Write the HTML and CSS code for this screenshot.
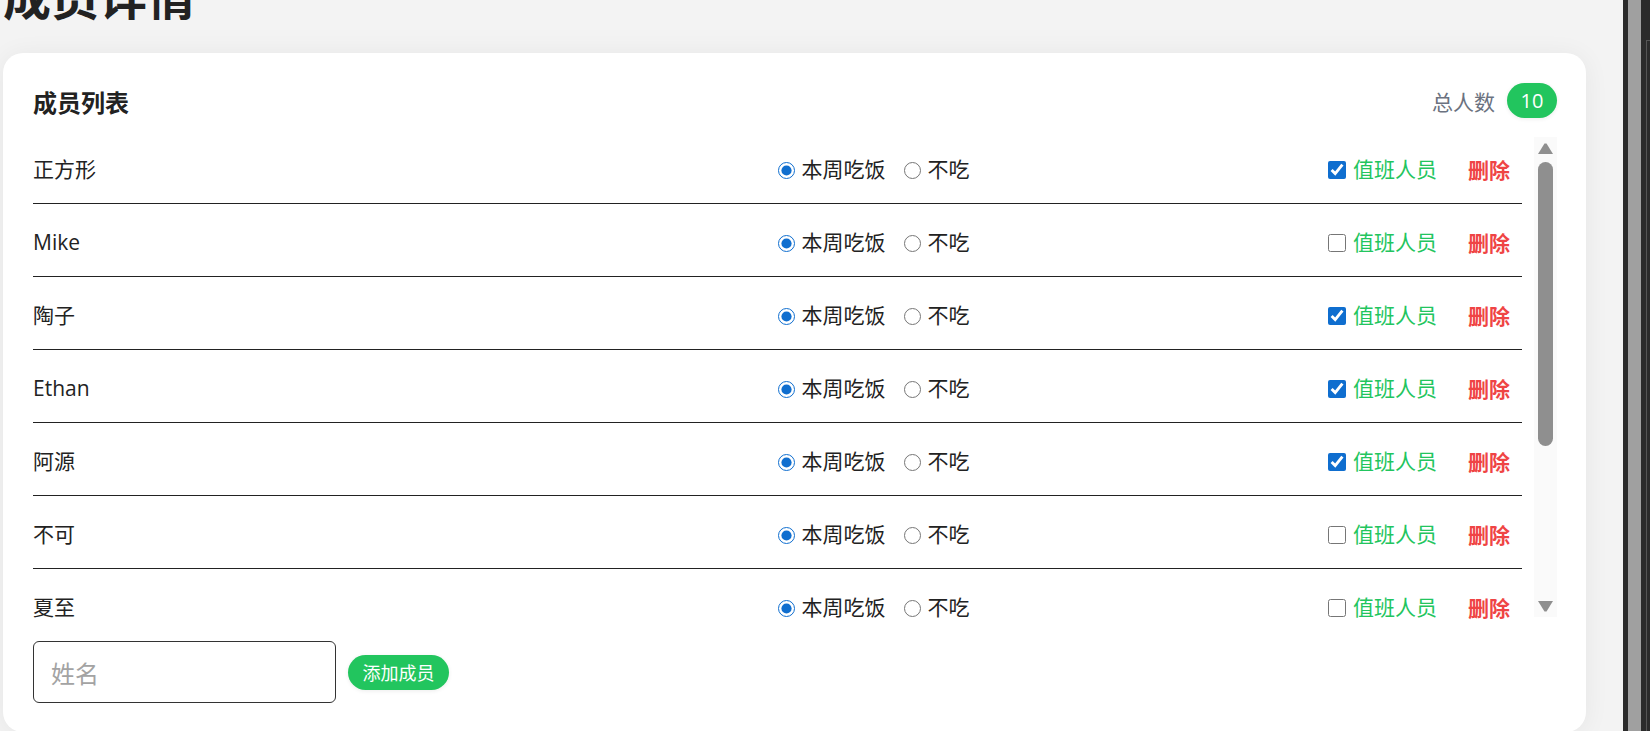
FILE: index.html
```html
<!DOCTYPE html>
<html lang="zh-CN">
<head>
<meta charset="utf-8">
<title>成员详情</title>
<link rel="stylesheet" href="styles.css">
</head>
<body>
<div class="app">
  <main class="page">
    <h1 class="title">成员详情</h1>
    <section class="card">
      <header class="card-head">
        <h2 class="card-title">成员列表</h2>
        <div class="total"><span>总人数</span><span class="badge">10</span></div>
      </header>
      <div class="list-wrap">
        <ul class="list">
          <li class="row">
            <span class="name">正方形</span>
            <div class="meal">
              <label class="opt"><input type="radio" name="m1" checked>本周吃饭</label>
              <label class="opt"><input type="radio" name="m1">不吃</label>
            </div>
            <label class="duty"><input type="checkbox" checked>值班人员</label>
            <button class="del" type="button">删除</button>
          </li>
          <li class="row">
            <span class="name">Mike</span>
            <div class="meal">
              <label class="opt"><input type="radio" name="m2" checked>本周吃饭</label>
              <label class="opt"><input type="radio" name="m2">不吃</label>
            </div>
            <label class="duty"><input type="checkbox">值班人员</label>
            <button class="del" type="button">删除</button>
          </li>
          <li class="row">
            <span class="name">陶子</span>
            <div class="meal">
              <label class="opt"><input type="radio" name="m3" checked>本周吃饭</label>
              <label class="opt"><input type="radio" name="m3">不吃</label>
            </div>
            <label class="duty"><input type="checkbox" checked>值班人员</label>
            <button class="del" type="button">删除</button>
          </li>
          <li class="row">
            <span class="name">Ethan</span>
            <div class="meal">
              <label class="opt"><input type="radio" name="m4" checked>本周吃饭</label>
              <label class="opt"><input type="radio" name="m4">不吃</label>
            </div>
            <label class="duty"><input type="checkbox" checked>值班人员</label>
            <button class="del" type="button">删除</button>
          </li>
          <li class="row">
            <span class="name">阿源</span>
            <div class="meal">
              <label class="opt"><input type="radio" name="m5" checked>本周吃饭</label>
              <label class="opt"><input type="radio" name="m5">不吃</label>
            </div>
            <label class="duty"><input type="checkbox" checked>值班人员</label>
            <button class="del" type="button">删除</button>
          </li>
          <li class="row">
            <span class="name">不可</span>
            <div class="meal">
              <label class="opt"><input type="radio" name="m6" checked>本周吃饭</label>
              <label class="opt"><input type="radio" name="m6">不吃</label>
            </div>
            <label class="duty"><input type="checkbox">值班人员</label>
            <button class="del" type="button">删除</button>
          </li>
          <li class="row">
            <span class="name">夏至</span>
            <div class="meal">
              <label class="opt"><input type="radio" name="m7" checked>本周吃饭</label>
              <label class="opt"><input type="radio" name="m7">不吃</label>
            </div>
            <label class="duty"><input type="checkbox">值班人员</label>
            <button class="del" type="button">删除</button>
          </li>
        </ul>
        <div class="sb">
          <svg class="sb-arrow" viewBox="0 0 15 11"><polygon points="6.5,0.5 8.5,0.5 15,11 0,11" fill="#8f8f8f"/></svg>
          <div class="sb-track"><div class="sb-thumb"></div></div>
          <svg class="sb-arrow" viewBox="0 0 15 11"><polygon points="0,0 15,0 8.5,10.5 6.5,10.5" fill="#8f8f8f"/></svg>
        </div>
      </div>
      <form class="add">
        <input class="add-input" type="text" placeholder="姓名">
        <button class="add-btn" type="button">添加成员</button>
      </form>
    </section>
  </main>
  <div class="winbar">
    <div class="wb-a"></div>
    <div class="wb-b"></div>
    <div class="wb-c"><div class="wb-line"></div></div>
  </div>
</div>
</body>
</html>
```

FILE: styles.css
```css
html, body {
  margin: 0;
  height: 731px;
  overflow: hidden;
}
body {
  background: #f3f3f3;
  color: #222;
  font-family: "Open Sans", "Noto Sans CJK SC", sans-serif;
}
.app {
  display: flex;
  height: 731px;
  overflow: hidden;
}
.page {
  flex: 1;
  min-width: 0;
  padding: 0 37px 0 3px;
}
.title {
  margin: -30px 0 35px;
  font-family: "Noto Sans CJK SC", sans-serif;
  font-size: 48px;
  line-height: 48px;
  font-weight: 700;
  color: #222;
}
.card {
  background: #fff;
  border-radius: 20px;
  padding: 30px 29px 29px 30px;
  box-shadow: 0 2px 26px rgba(0, 0, 0, 0.06);
}
.card-head {
  display: flex;
  justify-content: space-between;
  align-items: center;
  height: 35px;
  margin-bottom: 19px;
}
.card-title {
  margin: 3px 0 0;
  font-family: "Noto Sans CJK SC", sans-serif;
  font-size: 24px;
  font-weight: 700;
  line-height: 32px;
  color: #222;
}
.total {
  display: flex;
  align-items: center;
  gap: 12px;
  color: #6b7280;
  font-size: 21px;
  font-family: "Noto Sans CJK SC", sans-serif;
}
.badge {
  display: flex;
  align-items: center;
  justify-content: center;
  width: 50px;
  height: 35px;
  border-radius: 18px;
  background: #22c55e;
  color: #fff;
  font-family: "Open Sans", sans-serif;
  font-size: 20px;
  box-shadow: 0 1px 4px rgba(0, 0, 0, 0.08);
}
.list-wrap {
  display: flex;
  align-items: flex-start;
  gap: 12px;
  height: 486px;
  margin-bottom: 18px;
}
.list {
  flex: 1;
  min-width: 0;
  height: 486px;
  margin: 0;
  padding: 0;
  list-style: none;
  overflow: hidden;
}
.row {
  display: flex;
  align-items: center;
  height: 66px;
  line-height: 1.2;
  border-bottom: 1px solid #222;
  margin-bottom: 6px;
}
.name {
  flex: 0 0 50%;
  font-size: 21px;
}
.meal {
  display: flex;
  align-items: center;
  font-size: 21px;
}
.opt {
  display: flex;
  align-items: center;
  gap: 7px;
}
.opt + .opt {
  margin-left: 18px;
}
.opt input {
  width: 17px;
  height: 17px;
  margin: 0;
  accent-color: #0f6ecf;
}
.duty {
  margin-left: auto;
  display: flex;
  align-items: center;
  gap: 7px;
  color: #22c55e;
  font-size: 21px;
}
.duty input {
  width: 18px;
  height: 18px;
  margin: 0;
  accent-color: #0f6ecf;
}
.del {
  margin: 0 12px 0 31px;
  padding: 0;
  border: 0;
  background: none;
  color: #ef4444;
  font-family: "Noto Sans CJK SC", sans-serif;
  font-size: 21px;
  line-height: 1.2;
  font-weight: 700;
}
.sb {
  flex: 0 0 23px;
  height: 480px;
  display: flex;
  flex-direction: column;
  align-items: center;
  box-sizing: border-box;
  padding: 6px 0 5px;
  background: #fafafa;
}
.sb-arrow {
  display: block;
  width: 15px;
  height: 11px;
}
.sb-track {
  flex: 1;
  width: 15px;
  padding-top: 8px;
}
.sb-thumb {
  height: 284px;
  border-radius: 8px;
  background: #8f8f8f;
}
.add {
  display: flex;
  align-items: center;
  gap: 12px;
  margin: 0;
}
.add-input {
  box-sizing: border-box;
  width: 303px;
  height: 62px;
  padding: 0 17px;
  border: 1px solid #333;
  border-radius: 6px;
  font-family: "Noto Sans CJK SC", sans-serif;
  font-size: 24px;
  color: #222;
  outline: none;
}
.add-input::placeholder {
  color: #a3a3a3;
}
.add-btn {
  width: 101px;
  height: 35px;
  padding: 0;
  border: 0;
  border-radius: 18px;
  background: #22c55e;
  color: #fff;
  font-family: "Noto Sans CJK SC", sans-serif;
  font-size: 18px;
  box-shadow: 0 1px 4px rgba(0, 0, 0, 0.08);
}
.winbar {
  flex: 0 0 27px;
  display: flex;
}
.wb-a {
  width: 5px;
  background: #2b2b2b;
}
.wb-b {
  width: 13px;
  background: #a0a0a0;
}
.wb-c {
  flex: 1;
  background: #2b2b2b;
  padding: 40px 0 0 5px;
}
.wb-line {
  height: 100%;
  border-left: 1px solid #555;
  border-top: 1px solid #555;
}
```
